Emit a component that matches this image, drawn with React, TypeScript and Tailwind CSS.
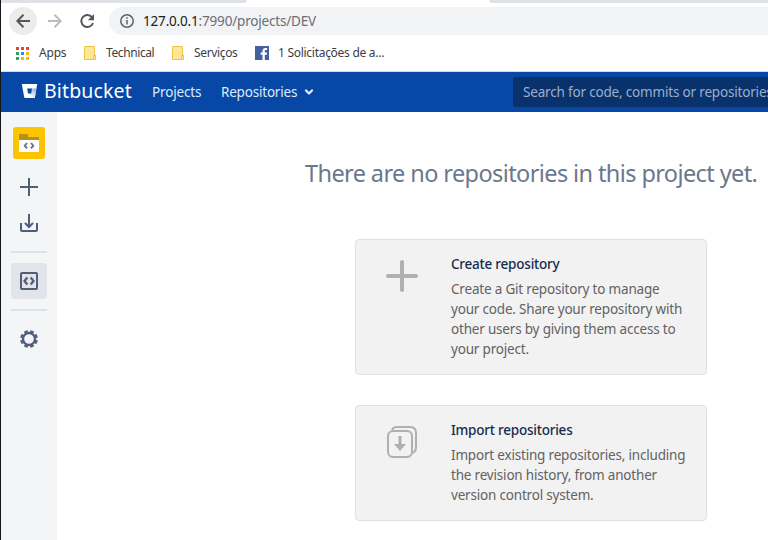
import React from "react";

function Line({ className = "", children }: { className?: string; children: React.ReactNode }) {
  return <span className={`block whitespace-nowrap ${className}`}>{children}</span>;
}

function BookmarkFolder() {
  return (
    <svg width="12" height="14" viewBox="0 0 12 14" className="shrink-0">
      <path d="M.5.5h10v8.500h1v4.500H.5z" fill="#ffe694" stroke="#e9c54e" />
      <path d="M9.500 13V9.500h1.500" fill="none" stroke="#e9c54e" />
    </svg>
  );
}

const appColors = [
  "#ea4335", "#ea4335", "#ea4335",
  "#34a060", "#2196e8", "#fbb400",
  "#34a060", "#fbb400", "#fbb400",
];

function Browser() {
  return (
    <header className="h-[72px] shrink-0 border-b border-[#d8dadd] bg-white text-[#3c4043]">
      <div className="flex h-[7px] justify-between">
        <div className="h-[3px] w-[246px] rounded-br-[6px] bg-[#dee1e6]" />
        <div className="h-[3px] w-[279px] rounded-bl-[6px] bg-[#dee1e6]" />
      </div>
      <div className="flex h-7 items-center pl-2">
        <div className="flex size-7 items-center justify-center rounded-full bg-[#ececed]">
          <svg width="14" height="14" viewBox="0 0 14 14" fill="none" stroke="#53575c" strokeWidth="2"><path d="M14 7H1.500M7.500.8 1.300 7l6.200 6.200" /></svg>
        </div>
        <svg className="ml-[11px]" width="14" height="14" viewBox="0 0 14 14" fill="none" stroke="#b9bbbe" strokeWidth="2"><path d="M0 7h12.500M6.500.8 12.700 7l-6.200 6.200" /></svg>
        <svg className="ml-[18px]" width="15" height="14" viewBox="0 0 15 14"><path d="M12.300 3.600A6 6 0 1 0 13 9" fill="none" stroke="#53575c" strokeWidth="2" /><path d="M14 0v6.200H7.800z" fill="#53575c" /></svg>
        <div className="ml-[14px] flex h-7 flex-1 items-center rounded-l-full bg-[#f1f3f4] pl-[11px]">
          <svg width="14" height="14" viewBox="0 0 14 14" fill="none" stroke="#5f6368"><circle cx="7" cy="7" r="6.200" strokeWidth="1.500" /><path d="M7 6v4.500M7 3.300v1.500" strokeWidth="1.500" /></svg>
          <Line className="ml-[9px] text-[13.5px] leading-5 tracking-[-0.18px] text-[#6b6f74]"><span className="text-[#202124]">127.0.0.1</span>:7990/projects/DEV</Line>
        </div>
      </div>
      <div className="flex h-9 items-center pl-[15px] text-[12px]">
        <div className="grid grid-cols-3 gap-[2px]">
          {appColors.map((c, i) => <span key={i} className="size-[3px]" style={{ background: c }} />)}
        </div>
        <Line className="ml-[10px] w-[27px] tracking-[-0.2px]">Apps</Line>
        <div className="ml-[18px] flex items-center gap-[10px]"><BookmarkFolder /><Line className="w-12 tracking-[-0.4px]">Technical</Line></div>
        <div className="ml-[18px] flex items-center gap-[10px]"><BookmarkFolder /><Line className="w-[43px] tracking-[-0.35px]">Serviços</Line></div>
        <svg className="ml-[18px]" width="14" height="14" viewBox="0 0 14 14"><path fill="#4460a0" d="M0 0h14v14H0z" /><path fill="#fff" d="M7.500 14V8.700H5.700V6.600h1.800V5c0-2 1.200-3 3-3h1.600v2H11c-.9 0-1.200.4-1.200 1.200v1.400h2.300l-.3 2.100h-2V14z" /></svg>
        <Line className="ml-[9px] tracking-[-0.28px]">1 Solicitações de a...</Line>
      </div>
    </header>
  );
}

function AppBar() {
  return (
    <nav className="flex h-10 shrink-0 items-center bg-[#0747a6] pl-5 text-[13.5px] text-[#deebff]">
      <svg width="17" height="16" viewBox="0 0 17 16">
        <defs><linearGradient id="bucket" x1="1" y1="0" x2=".35" y2=".8"><stop stopColor="#8fa8d8" /><stop offset="1" stopColor="#fff" /></linearGradient></defs>
        <path d="M.8 0h15.400l-2.300 13.300q-.1.700-.8.700H4q-.7 0-.8-.7z" fill="#fff" />
        <path d="M10.500 4.500h5l-1.600 8.800q-.1.700-.8.700H5.500l4-4.700z" fill="url(#bucket)" />
        <path d="M6.200 4.500h4.800L10.200 9.500H7z" fill="#0747a6" />
      </svg>
      <Line className="-mt-[3px] ml-[6px] w-[89px] text-[19.5px] leading-6 tracking-[0.15px] text-white">Bitbucket</Line>
      <Line className="ml-[19px] mt-px w-[50px] tracking-[-0.15px]">Projects</Line>
      <Line className="ml-[19px] mt-px w-[78px] tracking-[-0.2px]">Repositories</Line>
      <svg className="ml-[5px]" width="10" height="8" viewBox="0 0 10 8" fill="none" stroke="#deebff" strokeWidth="2.300" strokeLinecap="round" strokeLinejoin="round"><path d="m2 2.500 3 3 3-3" /></svg>
      <div className="ml-auto flex h-[30px] w-[255px] items-center overflow-hidden rounded-l-[3px] bg-[#09326c] pl-[10px] text-[#9caecb]"><Line className="mt-px tracking-[-0.18px]">Search for code, commits or repositories</Line></div>
    </nav>
  );
}

function Sidebar() {
  return (
    <aside className="flex w-14 shrink-0 flex-col items-center bg-[#f4f5f7] pt-[15px] text-[#505f79]">
      <svg width="32" height="32" viewBox="0 0 32 32">
        <rect width="32" height="32" rx="3" fill="#ffc400" />
        <path d="M6 13V8q0-1 1-1h8v3h11v3z" fill="#b5921a" />
        <path d="M6 13h20v12H6z" fill="#fff" />
        <path d="m14 16-2.300 2.700L14 21.400M18 16l2.300 2.700-2.300 2.700" fill="none" stroke="#6b7486" strokeWidth="1.900" />
      </svg>
      <svg className="mt-[19px]" width="18" height="18" viewBox="0 0 18 18" fill="none" stroke="currentColor" strokeWidth="2"><path d="M9 0v18M0 9h18" /></svg>
      <svg className="mt-[18px]" width="18" height="18" viewBox="0 0 18 18" fill="none" stroke="currentColor" strokeWidth="2"><path d="M9 0v12M5.500 9.500 9 13l3.500-3.500" strokeLinecap="round" /><path d="M1 9v7q0 1 1 1h14q1 0 1-1V9" /></svg>
      <div className="mt-[19px] h-[2px] w-9 bg-[#dfe1e6]" />
      <div className="mt-[10px] flex size-9 items-center justify-center rounded-[3px] bg-[#e2e4e9]">
        <svg width="18" height="18" viewBox="0 0 18 18" fill="none" stroke="currentColor" strokeWidth="2"><rect x="1" y="1" width="16" height="16" rx="1" /><path d="M7.300 5.500 4.500 9l2.800 3.500M10.700 5.500 13.500 9l-2.800 3.500" strokeWidth="2.300" /></svg>
      </div>
      <div className="mt-[10px] h-[2px] w-9 bg-[#dfe1e6]" />
      <svg className="mt-[19px]" width="18" height="18" viewBox="0 0 18 18" fill="none" stroke="currentColor">
        <circle cx="9" cy="9" r="6" strokeWidth="2.400" />
        <circle cx="9" cy="9" r="7.700" strokeWidth="2.400" pathLength="80" strokeDasharray="6 4" strokeDashoffset="-2" />
      </svg>
    </aside>
  );
}

function ActionCard({ className, icon, title, lines }: { className: string; icon: React.ReactNode; title: string; lines: string[] }) {
  return (
    <section className={`flex w-[352px] rounded-[4px] border border-[#dfe1e6] bg-[#f2f2f2] pt-[14px] text-[13.5px] leading-5 ${className}`}>
      <div className="w-[95px] shrink-0 pl-[30px] pt-[6px]">{icon}</div>
      <div>
        <Line className="font-medium tracking-[-0.22px] text-[#172b4d]">{title}</Line>
        <div className="mt-[5px] tracking-[-0.19px] text-[#626262]">{lines.map((l) => <Line key={l}>{l}</Line>)}</div>
      </div>
    </section>
  );
}

export default function App() {
  return (
    <div className="flex h-[540px] w-[768px] flex-col overflow-hidden border-l border-[#17171b] bg-white font-['Noto_Sans','Open_Sans',sans-serif]">
      <Browser />
      <AppBar />
      <div className="flex flex-1">
        <Sidebar />
        <main className="flex flex-1 flex-col pl-[248px]">
          <h1 className="mt-[45px] h-8 whitespace-nowrap text-[23.5px] leading-8 tracking-[-0.6px] text-[#6b778c]">There are no repositories in this project yet.</h1>
          <ActionCard
            className="ml-[50px] mt-[50px] h-[136px]"
            title="Create repository"
            lines={["Create a Git repository to manage", "your code. Share your repository with", "other users by giving them access to", "your project."]}
            icon={<svg width="32" height="32" viewBox="0 0 32 32" stroke="#b0b0b0" strokeWidth="4" strokeLinecap="round"><path d="M16 2v28M2 16h28" /></svg>}
          />
          <ActionCard
            className="ml-[50px] mt-[30px] h-[116px]"
            title="Import repositories"
            lines={["Import existing repositories, including", "the revision history, from another", "version control system."]}
            icon={<svg width="32" height="32" viewBox="0 0 32 32" fill="none" stroke="#b0b0b0" strokeWidth="2"><rect x="2" y="5" width="24" height="26" rx="5" /><path d="M6 4q1-3 5-3h13q6 0 6 6v14q0 5-4 6" /><path d="M14 10v10" strokeWidth="3" /><path d="M8 18h12l-6 7z" fill="#b0b0b0" stroke="none" /></svg>}
          />
        </main>
      </div>
    </div>
  );
}
